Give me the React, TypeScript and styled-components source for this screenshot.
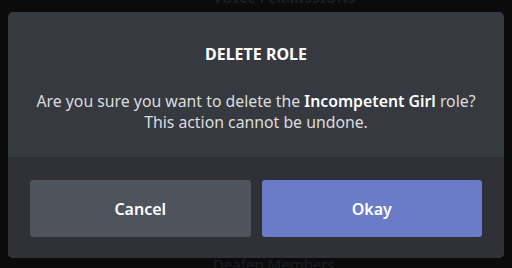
import React from "react";
import styled, { createGlobalStyle } from "styled-components";

const Global = createGlobalStyle`
  html, body { margin: 0; padding: 0; background: #0b0b0c; }
  body { font-family: "Noto Sans", "Open Sans", sans-serif; }
`;

const Page = styled.div`
  position: relative;
  width: 512px;
  height: 268px;
  overflow: hidden;
  background: #0b0b0c;
  padding: 12px 8px 10px;
  box-sizing: border-box;
`;

const Behind = styled.div<{ $top: number }>`
  position: absolute;
  left: 213px;
  top: ${(p) => p.$top}px;
  font-size: 15px;
  color: #1c1d20;
  white-space: nowrap;
`;

const BehindHeading = styled(Behind)`
  font-weight: 700;
  font-size: 13.5px;
  letter-spacing: 0.4px;
  text-transform: uppercase;
`;

const Modal = styled.div`
  position: relative;
  width: 496px;
  height: 246px;
  border-radius: 5px;
  overflow: hidden;
  display: flex;
  flex-direction: column;
  background: #36393f;
`;

const Body = styled.div`
  height: 145px;
  box-sizing: border-box;
  padding-top: 30px;
  display: flex;
  flex-direction: column;
  align-items: center;
  text-align: center;
`;

const Title = styled.h2`
  margin: 0;
  font-size: 16px;
  line-height: 24px;
  font-weight: 700;
  color: #ffffff;
  text-transform: uppercase;
`;

const Message = styled.p`
  margin: 25px 0 0;
  font-size: 15.8px;
  line-height: 21px;
  color: #dcddde;
`;

const Strong = styled.strong`
  font-weight: 600;
  color: #ffffff;
`;

const Footer = styled.div`
  flex: 1;
  background: #2f3136;
  padding: 23px 22px 21px;
  display: grid;
  grid-template-columns: 1fr 1fr;
  gap: 11px;
`;

const Button = styled.button<{ $primary?: boolean }>`
  border: 0;
  border-radius: 3px;
  height: 57px;
  font-family: inherit;
  font-size: 16px;
  font-weight: 600;
  color: #ffffff;
  background: ${(p) => (p.$primary ? "#6a7cc7" : "#4f545c")};
  cursor: pointer;
`;

export default function App() {
  return (
    <>
      <Global />
      <Page>
        <BehindHeading $top={-11}>Voice Permissions</BehindHeading>
        <Behind $top={254}>Deafen Members</Behind>
        <Modal>
          <Body>
            <Title>Delete Role</Title>
            <Message>
              Are you sure you want to delete the <Strong>Incompetent Girl</Strong> role?
              <br />
              This action cannot be undone.
            </Message>
          </Body>
          <Footer>
            <Button>Cancel</Button>
            <Button $primary>Okay</Button>
          </Footer>
        </Modal>
      </Page>
    </>
  );
}
